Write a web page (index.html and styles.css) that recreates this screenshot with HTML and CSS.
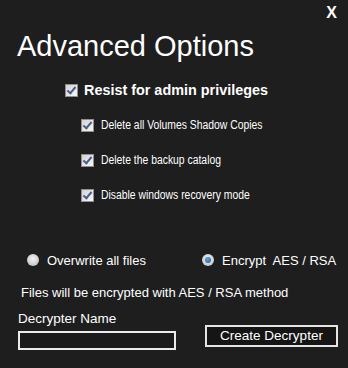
FILE: index.html
```html
<!DOCTYPE html>
<html lang="en">
<head>
    <meta charset="UTF-8">
    <meta name="viewport" content="width=device-width, initial-scale=1.0">
    <title>Advanced Options</title>
    <link rel="stylesheet" href="styles.css">
</head>
<body>
    <div class="window">
        <div class="topbar">
            <span class="close-btn">X</span>
        </div>
        <h1 class="title">Advanced Options</h1>

        <label class="check-row main-check">
            <span class="checkbox checked"></span>
            <span>Resist for admin privileges</span>
        </label>

        <div class="sub-checks">
            <label class="check-row sub-check">
                <span class="checkbox checked"></span>
                <span class="narrow">Delete all Volumes Shadow Copies</span>
            </label>
            <label class="check-row sub-check">
                <span class="checkbox checked"></span>
                <span class="narrow">Delete the backup catalog</span>
            </label>
            <label class="check-row sub-check">
                <span class="checkbox checked"></span>
                <span class="narrow">Disable windows recovery mode</span>
            </label>
        </div>

        <div class="radio-row">
            <label class="radio-opt">
                <span class="radio"></span>
                <span>Overwrite all files</span>
            </label>
            <label class="radio-opt">
                <span class="radio selected"></span>
                <span>Encrypt&nbsp; AES / RSA</span>
            </label>
        </div>

        <p class="info">Files will be encrypted with AES / RSA method</p>

        <div class="bottom">
            <div class="name-field">
                <span class="field-label">Decrypter Name</span>
                <span class="text-input"></span>
            </div>
            <button class="create-btn">Create Decrypter</button>
        </div>
    </div>
</body>
</html>
```

FILE: styles.css
```css
body {
    margin: 0;
    background-color: #1e1e1e;
    font-family: "Liberation Sans", Arial, sans-serif;
    color: #ffffff;
}
.window {
    width: 348px;
    height: 368px;
    display: flex;
    flex-direction: column;
}
.topbar {
    display: flex;
    justify-content: flex-end;
    padding: 3px 11px 0 0;
}
.close-btn {
    font-size: 16px;
    font-weight: bold;
    line-height: 20px;
}
.title {
    margin: 6px 0 0 0;
    padding-left: 17px;
    font-size: 29px;
    font-weight: normal;
    line-height: 34px;
}
.check-row {
    display: flex;
    align-items: center;
    height: 18px;
}
.main-check {
    margin-top: 18px;
    padding-left: 65px;
    gap: 6px;
    font-size: 14.4px;
    font-weight: bold;
}
.sub-checks {
    display: flex;
    flex-direction: column;
    gap: 17px;
    margin-top: 17px;
    padding-left: 81px;
}
.sub-check {
    gap: 7px;
    font-size: 12.5px;
}
.narrow {
    display: inline-block;
    white-space: nowrap;
    transform: scaleX(0.83);
    transform-origin: left center;
}
.checkbox {
    width: 11px;
    height: 11px;
    border: 1px solid #8f8f8f;
    background: linear-gradient(135deg, #d2d2d2, #f7f7f7);
    flex-shrink: 0;
    position: relative;
}
.checkbox.checked::after {
    content: "";
    position: absolute;
    left: 3px;
    top: 0px;
    width: 3px;
    height: 7px;
    border: solid #4a5d8f;
    border-width: 0 2px 2px 0;
    transform: rotate(40deg);
}
.radio-row {
    display: flex;
    margin-top: 47px;
    padding-left: 27px;
    font-size: 13px;
}
.radio-opt {
    display: flex;
    align-items: center;
    gap: 8px;
    height: 18px;
}
.radio-opt:first-child {
    width: 175px;
}
.radio {
    width: 12px;
    height: 12px;
    border-radius: 50%;
    background: radial-gradient(circle at 50% 40%, #f4f4f4 0, #c9c9c9 70%, #9a9a9a 100%);
    flex-shrink: 0;
    position: relative;
}
.radio.selected::after {
    content: "";
    position: absolute;
    left: 3px;
    top: 3px;
    width: 6px;
    height: 6px;
    border-radius: 50%;
    background: radial-gradient(circle at 40% 35%, #5fa6e0, #1c5a96);
}
.info {
    margin: 16px 0 0 0;
    padding-left: 21px;
    font-size: 13px;
    line-height: 16px;
}
.bottom {
    display: flex;
    margin-top: 10px;
    padding-left: 18px;
}
.name-field {
    display: flex;
    flex-direction: column;
}
.field-label {
    font-size: 13.5px;
    line-height: 16px;
}
.text-input {
    margin-top: 4px;
    width: 154px;
    height: 15px;
    border: 2px solid #ececec;
    background-color: #1b1b1b;
}
.create-btn {
    margin: 14px 0 0 29px;
    align-self: flex-start;
    width: 133px;
    height: 22px;
    padding: 0;
    border: 2px solid #e4e4e4;
    background-color: #151515;
    color: #ffffff;
    font-family: "Liberation Sans", Arial, sans-serif;
    font-size: 13.5px;
    line-height: 18px;
}
```
